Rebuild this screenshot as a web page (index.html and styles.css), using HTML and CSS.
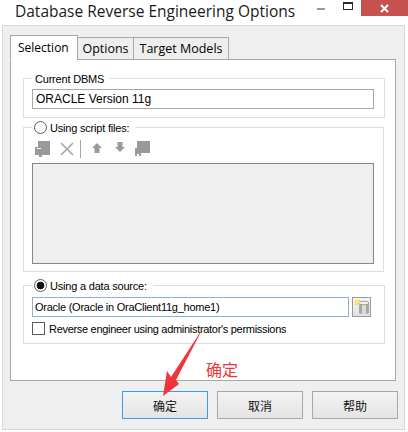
FILE: index.html
```html
<!DOCTYPE html>
<html lang="en">
<head>
    <meta charset="UTF-8">
    <meta name="viewport" content="width=device-width, initial-scale=1.0">
    <title>Database Reverse Engineering Options</title>
    <link rel="stylesheet" href="styles.css">
</head>
<body>
    <div class="titlebar">
        <span class="title">Database Reverse Engineering Options</span>
        <div class="win-controls">
            <span class="win-min"></span>
            <span class="win-max"></span>
            <span class="win-close">
                <svg width="9" height="9" viewBox="0 0 9 9"><path d="M1 1L8 8M8 1L1 8" stroke="#fff" stroke-width="2"/></svg>
            </span>
        </div>
    </div>

    <div class="dialog">
        <div class="tabs">
            <div class="tab active">Selection</div>
            <div class="tab tab-options">Options</div>
            <div class="tab tab-models">Target Models</div>
        </div>

        <div class="panel">
            <fieldset class="group group-dbms">
                <legend>Current DBMS</legend>
                <div class="input">ORACLE Version 11g</div>
            </fieldset>

            <fieldset class="group group-script">
                <legend class="radio-legend"><span class="radio"></span>Using script files:</legend>
                <div class="toolbar">
                    <svg width="16" height="16" viewBox="0 0 16 16"><path d="M3 0H15V14H7V16H4V14H0V6H3Z" fill="#9a9a9a"/><path d="M2 7H6V8H2Z" fill="#fff"/></svg>
                    <svg width="16" height="16" viewBox="0 0 16 16"><path d="M2 2L14 14M14 2L2 14" stroke="#a6a6a6" stroke-width="1.6"/></svg>
                    <span class="tool-sep"></span>
                    <svg width="12" height="16" viewBox="0 0 12 16"><path d="M6 2L11 7H8.500V12H3.500V7H1Z" fill="#9a9a9a"/></svg>
                    <svg class="tool-down" width="12" height="16" viewBox="0 0 12 16"><path d="M3.500 1H8.500V6H11L6 11L1 6H3.500Z" fill="#9a9a9a"/></svg>
                    <svg width="16" height="16" viewBox="0 0 16 16"><path d="M3 0H16V12H7V15H5V13H3V15H1V7H3Z" fill="#9a9a9a"/></svg>
                </div>
                <div class="listbox"></div>
            </fieldset>

            <fieldset class="group group-source">
                <legend class="radio-legend"><span class="radio checked"></span>Using a data source:</legend>
                <div class="source-row">
                    <div class="input focused">Oracle (Oracle in OraClient11g_home1)</div>
                    <button class="db-btn">
                        <svg width="16" height="16" viewBox="0 0 16 16">
                            <path d="M5 4H15V14C15 15.500 5 15.500 5 14Z" fill="#a9a9a4"/>
                            <path d="M8 4H12V15H8Z" fill="#dcdcd6"/>
                            <ellipse cx="10" cy="4" rx="5" ry="1.800" fill="#f1f1ec" stroke="#8f8f8a" stroke-width="0.800"/>
                            <path d="M1 1H6V6H1Z" fill="#f2d340"/>
                            <path d="M3 1V6M1 3H6" stroke="#fff3b0" stroke-width="1"/>
                        </svg>
                    </button>
                </div>
                <label class="check-row"><span class="checkbox"></span>Reverse engineer using administrator's permissions</label>
            </fieldset>
        </div>

        <div class="buttons">
            <button class="btn default">确定</button>
            <button class="btn">取消</button>
            <button class="btn">帮助</button>
        </div>
    </div>

    <!-- annotation drawn over the screenshot -->
    <svg class="arrow" width="60" height="75" viewBox="0 0 60 75">
        <path d="M48 3L21 55L24 59L8 71L12 46L16 52Z" fill="#f0343c"/>
    </svg>
    <span class="note">确定</span>
</body>
</html>
```

FILE: styles.css
```css
* {
    box-sizing: border-box;
}

html, body {
    height: 100%;
}

body {
    margin: 0;
    width: 408px;
    height: 432px;
    position: relative;
    overflow: hidden;
    background-color: #ffffff;
    color: #000000;
    font-family: 'Liberation Sans', 'Noto Sans CJK SC', sans-serif;
    font-size: 11px;
}

.titlebar {
    height: 25px;
    display: flex;
    justify-content: space-between;
    background-color: #ffffff;
}

.title {
    padding: 1px 0 0 15px;
    font-family: 'Open Sans', sans-serif;
    font-size: 15.5px;
    line-height: 20px;
    color: #1a1a1a;
    white-space: nowrap;
}

.win-controls {
    display: flex;
    align-items: flex-start;
}

.win-min {
    width: 8px;
    height: 2px;
    margin: 8px 18px 0 0;
    background-color: #9a9a9a;
}

.win-max {
    width: 10px;
    height: 8px;
    margin: 2px 8px 0 0;
    border: 1px solid #2b2b2b;
    border-top-width: 2px;
}

.win-close {
    width: 47px;
    height: 16px;
    display: flex;
    align-items: center;
    justify-content: center;
    background-color: #c75050;
}

.dialog {
    height: 405px;
    margin: 0 3px 2px 2px;
    padding: 10px 6px 0 7px;
    background-color: #efefef;
    border: 1px solid #d9d9d9;
}

.tabs {
    display: flex;
    height: 24px;
    align-items: flex-end;
    position: relative;
    z-index: 1;
    margin-bottom: -1px;
}

.tab {
    height: 23px;
    padding-top: 2px;
    margin-left: -1px;
    font-family: 'Open Sans', sans-serif;
    font-size: 12.5px;
    text-align: center;
    background-color: #eeeeee;
    border: 1px solid #a8a8a8;
    white-space: nowrap;
}

.tab.active {
    height: 25px;
    width: 68px;
    margin-left: 0;
    padding: 3px 0 0 7px;
    font-size: 12px;
    text-align: left;
    background-color: #ffffff;
    border-bottom-color: #ffffff;
}

.tab-options {
    width: 57px;
}

.tab-models {
    width: 96px;
}

.panel {
    width: 386px;
    height: 322px;
    padding: 11px 10px 0 12px;
    background-color: #ffffff;
    border: 1px solid #a8a8a8;
}

.group {
    margin: 0;
    padding: 0 10px 0 8px;
    min-width: 0;
    border: 1px solid #dedede;
}

.group legend {
    display: flex;
    align-items: center;
    height: 15px;
    padding: 0 6px 0 3px;
    letter-spacing: -0.2px;
}

.group .radio-legend {
    padding-left: 2px;
}

.group-dbms {
    height: 47px;
}

.group-script {
    width: 361px;
    height: 152px;
    margin-top: 2px;
    padding-right: 9px;
}

.group-source {
    height: 66px;
    margin-top: 6px;
}

.input {
    height: 20px;
    padding-left: 2px;
    line-height: 18px;
    background-color: #ffffff;
    border: 1px solid #a8a8a8;
}

.group-dbms .input {
    margin-top: 3px;
    padding-left: 3px;
    font-size: 12px;
}

.radio {
    width: 13px;
    height: 13px;
    margin-right: 3px;
    border: 1px solid #5c5c5c;
    border-radius: 50%;
    background-color: #ffffff;
}

.radio.checked {
    background: radial-gradient(circle, #111111 0, #111111 3.5px, #ffffff 4.2px);
}

.toolbar {
    display: flex;
    align-items: center;
    height: 20px;
    margin-top: 4px;
    padding-left: 3px;
    gap: 8px;
}

.tool-sep {
    width: 1px;
    height: 18px;
    margin: 0 2px 0 -3px;
    background-color: #a6a6a6;
}

.tool-down {
    margin-left: 3px;
}

.listbox {
    height: 101px;
    margin-top: 4px;
    background-color: #efefef;
    border: 1px solid #85858d;
}

.source-row {
    display: flex;
    gap: 3px;
    margin-top: 4px;
    width: 339px;
}

.source-row .input {
    flex: 1;
    letter-spacing: -0.25px;
}

.input.focused {
    border-color: #8fb0d8;
}

.db-btn {
    width: 19px;
    height: 20px;
    padding: 0 0 0 1px;
    display: flex;
    align-items: center;
    justify-content: center;
    background: linear-gradient(#f4f4f4, #e2e2e2);
    border: 1px solid #9a9a9a;
}

.check-row {
    display: flex;
    align-items: center;
    margin-top: 5px;
    height: 13px;
    letter-spacing: -0.3px;
}

.checkbox {
    width: 13px;
    height: 13px;
    margin-right: 4px;
    background-color: #ffffff;
    border: 1px solid #5c5c5c;
}

.buttons {
    display: flex;
    justify-content: flex-end;
    gap: 9px;
    margin-top: 10px;
}

.btn {
    width: 86px;
    height: 28px;
    padding: 0;
    font-family: 'Noto Sans CJK SC', sans-serif;
    font-size: 12px;
    color: #111111;
    background: linear-gradient(#f3f3f3, #e4e4e4);
    border: 1px solid #a8a8a8;
}

.btn.default {
    border-color: #3f9be8;
}

.arrow {
    position: absolute;
    left: 155px;
    top: 325px;
}

.note {
    position: absolute;
    left: 206px;
    top: 359px;
    font-family: 'Noto Sans CJK SC', sans-serif;
    font-size: 16px;
    line-height: 20px;
    color: #f0343c;
}
```
